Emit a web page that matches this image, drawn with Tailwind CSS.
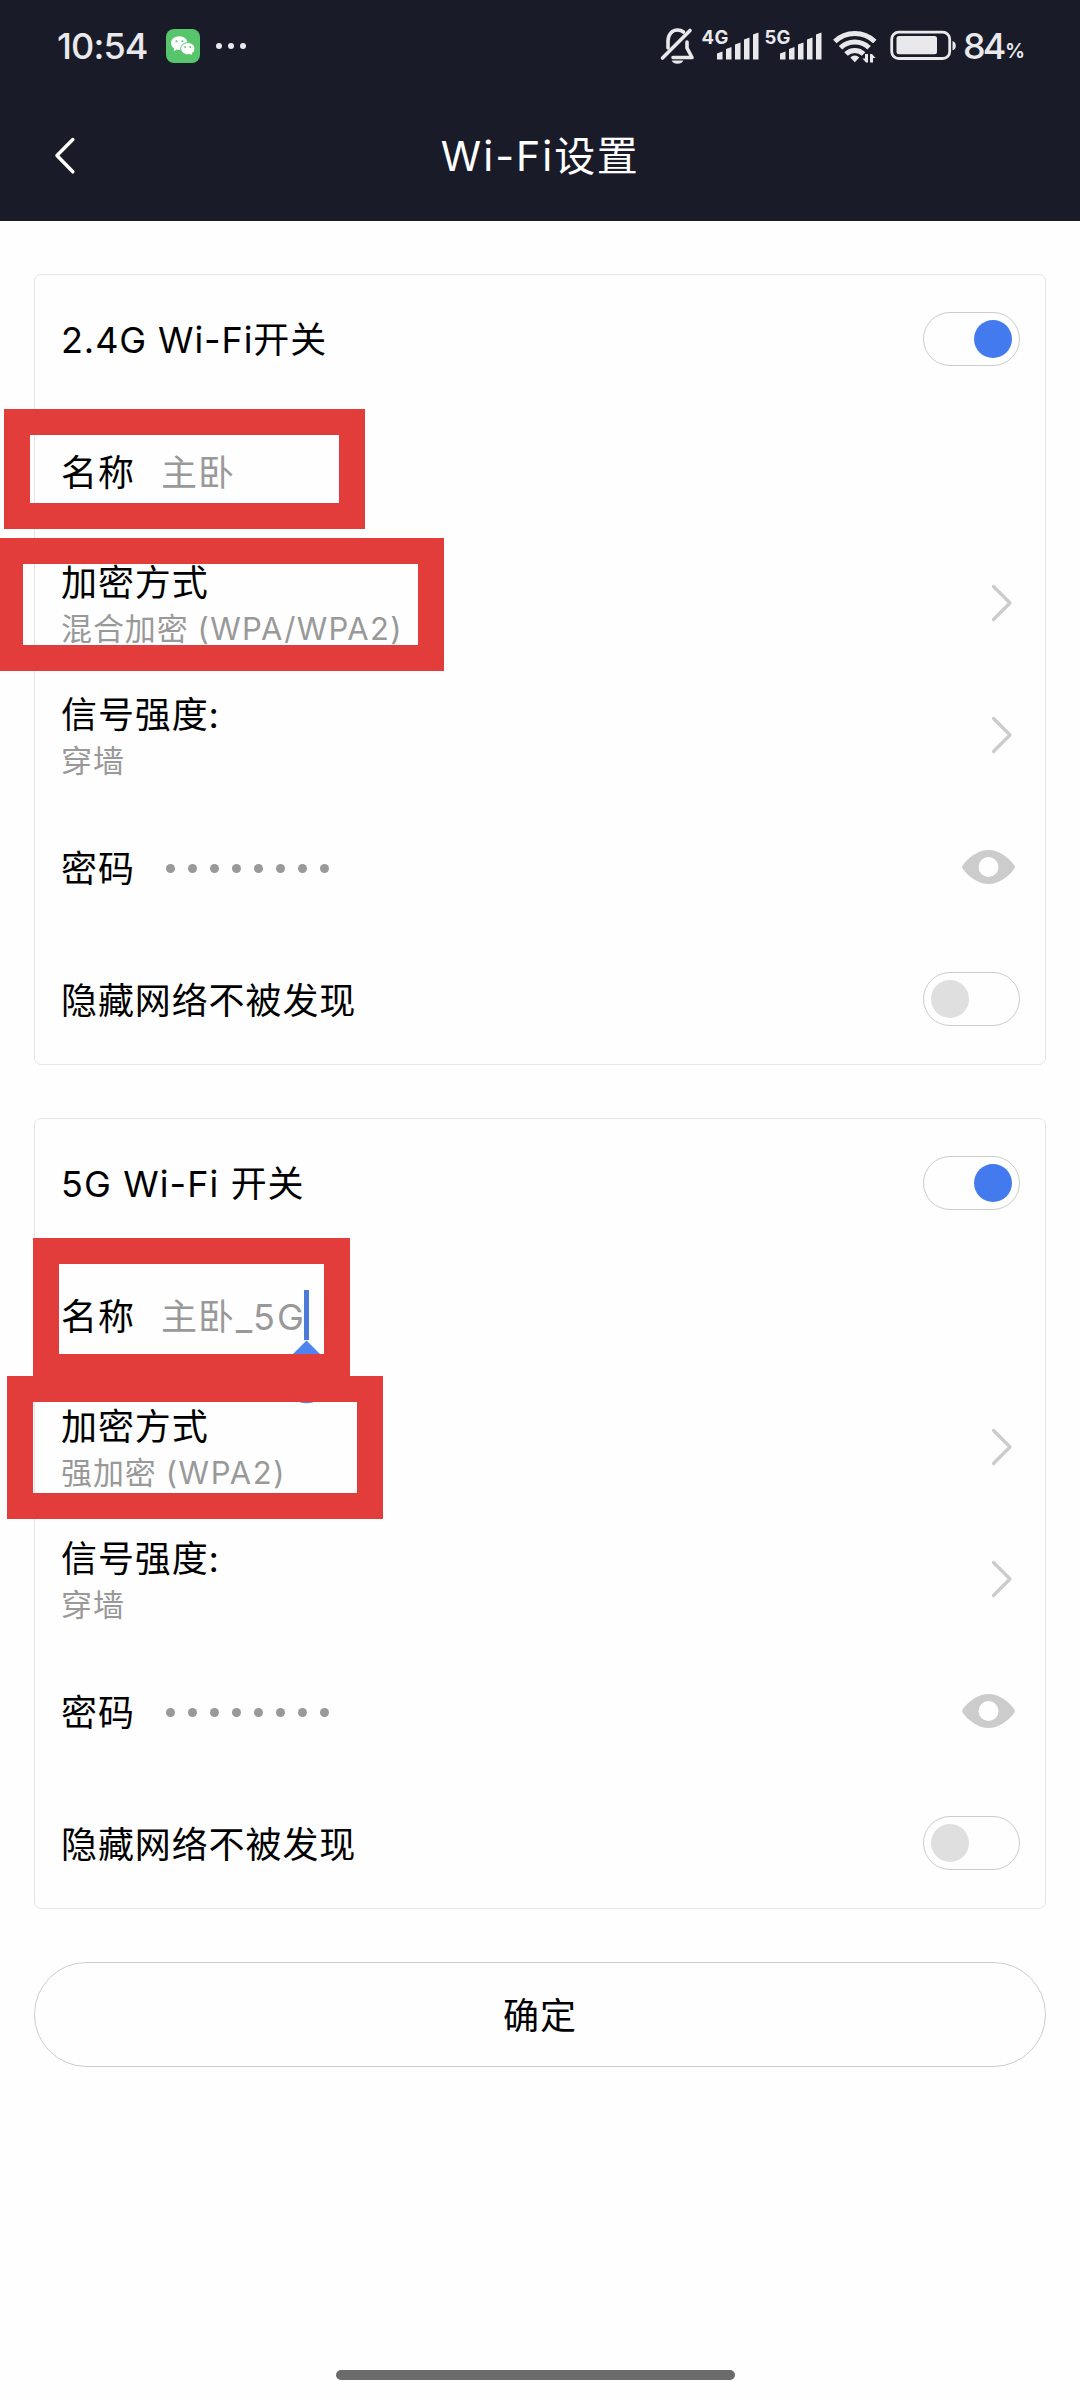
<!DOCTYPE html>
<html lang="zh-CN">
<head>
<meta charset="utf-8">
<title>Wi-Fi设置</title>
<script src="https://cdn.jsdelivr.net/npm/@tailwindcss/browser@4"></script>
</head>
<body class="relative flex h-[2400px] w-[1080px] flex-col overflow-hidden bg-[#fefefe] font-['Inter','Noto_Sans_CJK_SC',sans-serif] text-black">

<header class="h-[221px] shrink-0 bg-[#1a1b28] text-[#e9e9ec]">
  <div class="flex h-[92px] items-center pl-[57px] pr-[57px]">
    <span class="w-[109px] text-[36px] leading-[92px] font-medium tracking-[-0.900px]">10:54</span>
    <svg class="h-[34px] w-[34px]" viewBox="0 0 34 34">
      <rect width="34" height="34" rx="8" fill="#57c56c"/>
      <path d="M13.3 7.2c-4.7 0-8.3 3-8.3 6.900 0 2.200 1.200 4 3.100 5.300l-.3 2.800 3-1.600c.8.200 1.600.3 2.500.3 4.600 0 8.300-3 8.300-6.800s-3.700-6.900-8.300-6.900z" fill="#fff"/>
      <path d="M21.900 13.600c-4 0-7.200 2.700-7.200 6.100s3.200 6 7.200 6c.7 0 1.300-.1 1.900-.2l2.500 1.300-.3-2.300c1.800-1.100 2.900-2.800 2.900-4.800 0-3.400-3-6.100-7-6.100z" fill="#fff" stroke="#57c56c" stroke-width="1"/>
      <g fill="#57c56c"><circle cx="10.400" cy="12.200" r="1"/><circle cx="16.400" cy="12.200" r="1"/><circle cx="19.200" cy="18" r=".9"/><circle cx="24.200" cy="18" r=".9"/></g>
    </svg>
    <div class="ml-[15.500px] flex gap-[6px]">
      <i class="h-[6px] w-[6px] rounded-full bg-[#e9e9ec]"></i><i class="h-[6px] w-[6px] rounded-full bg-[#e9e9ec]"></i><i class="h-[6px] w-[6px] rounded-full bg-[#e9e9ec]"></i>
    </div>
    <svg class="ml-auto h-[92px] w-[303px] shrink-0" viewBox="657 0 303 92" fill="#e9e9ec">
      <!-- muted bell -->
      <g fill="none" stroke="#e9e9ec" stroke-width="3.600" stroke-linecap="round" stroke-linejoin="round">
        <path d="M668 48V41c0-6.500 4-11 9.500-11 2.500 0 4.500.8 6 2"/>
        <path d="M687 42v6l5 9.500H673"/>
        <path d="M662.500 58 690 30.500"/>
      </g>
      <path d="M671.500 60.500h12c-1 2-3.200 3.300-6 3.300s-5-1.300-6-3.300z"/>
      <text x="701.500" y="44" font-size="18.500" font-weight="700" textLength="27">4G</text>
      <path d="M717 53.500l5.500-2V59.500h-5.500zM726 49l5.500-2v12.500H726zM735 44.500l5.500-2v17H735zM744 39.500l5.500-2v22H744zM753 34.500l5.500-2v27H753z"/>
      <text x="764.500" y="44" font-size="18.500" font-weight="700" textLength="26">5G</text>
      <path d="M780 53.500l5.500-2V59.500h-5.500zM789 49l5.500-2v12.500H789zM798 44.500l5.500-2v17H798zM807 39.500l5.500-2v22H807zM816 34.500l5.500-2v27H816z"/>
      <!-- wifi -->
      <g fill="none" stroke="#e9e9ec" stroke-width="5">
        <path d="M834.800 41.500a29 29 0 0 1 40 0"/>
        <path d="M840.500 47.800a20.500 20.500 0 0 1 28.600 0"/>
        <path d="M846 54a12.500 12.500 0 0 1 17.600 0"/>
      </g>
      <path d="M850.300 57.600a6 6 0 0 1 9 0l-4.500 4.700z"/>
      <path d="M868 54v8.500h-2l-3.500-4h2.500V54zM870 62.500V54h2l3.500 4H873v4.500z"/>
      <!-- battery -->
      <rect x="891.700" y="32.200" width="58" height="26.300" rx="7" fill="none" stroke="#e9e9ec" stroke-width="2.800"/>
      <rect x="896.500" y="36" width="40.500" height="18.300" rx="2.500"/>
      <path d="M952.500 41c2.200.6 3.300 2.200 3.300 4.700s-1.100 4-3.300 4.600z"/>
    </svg>
    <span class="ml-[3px] w-[42px] text-[36px] leading-[92px] font-medium tracking-[-3px]">84</span><span class="mt-[9px] w-[18px] text-[20px] font-semibold tracking-[-1px]">%</span>
  </div>
  <div class="flex h-[129px] items-center text-white">
    <svg class="ml-[52px] h-[44px] w-[28px]" viewBox="0 0 28 44" fill="none" stroke="#fff" stroke-width="3.500" stroke-linecap="round" stroke-linejoin="round"><path d="M20.800 4.500 5 20.500l15.800 16.300"/></svg>
    <h1 class="flex-1 pr-[80px] pb-[2px] text-center text-[41px] leading-[60px]"><span class="tracking-[2px]">Wi-Fi</span><span class="tracking-[1.500px]">设置</span></h1>
  </div>
</header>

<main class="flex flex-col px-[34px] pt-[53px] text-[36px] tracking-[0.900px]">
  <section class="flex h-[791px] flex-col rounded-[7px] border border-[#e6e6e6] pl-[26px] pr-[25px]">
    <div class="flex h-[130px] items-center justify-between pb-[2px]"><span class="pt-[2px]">2.4G Wi-Fi开关</span><span class="flex h-[54px] w-[97px] items-center justify-end rounded-full border border-[#ccc] px-[7px]"><i class="h-[38px] w-[38px] rounded-full bg-[#437bef]"></i></span></div>
    <div class="flex h-[132px] items-center pt-[4px]"><span class="w-[100px]">名称</span><span class="text-[#999]">主卧</span></div>
    <div class="flex h-[132px] items-center justify-between">
      <div class="flex flex-col pt-[4px]"><span class="leading-[48px]">加密方式</span><span class="text-[31px] leading-[44px] text-[#999]">混合加密<span class="ml-[9px] tracking-[1.300px]">(WPA/WPA2)</span></span></div>
      <svg class="mr-[4px] h-[42px] w-[28px]" viewBox="0 0 28 42" fill="none" stroke="#ccc" stroke-width="3.300" stroke-linecap="round" stroke-linejoin="round"><path d="M5.500 4.500 22 21 5.500 37.500"/></svg>
    </div>
    <div class="flex h-[132px] items-center justify-between">
      <div class="flex flex-col pt-[4px]"><span class="leading-[48px]">信号强度:</span><span class="text-[31px] leading-[44px] text-[#999]">穿墙</span></div>
      <svg class="mr-[4px] h-[42px] w-[28px]" viewBox="0 0 28 42" fill="none" stroke="#ccc" stroke-width="3.300" stroke-linecap="round" stroke-linejoin="round"><path d="M5.500 4.500 22 21 5.500 37.500"/></svg>
    </div>
    <div class="flex h-[132px] items-center"><span class="w-[105px] pt-[4px]">密码</span>
      <div class="flex gap-[13px] pt-[2px]"><i class="h-[9px] w-[9px] rounded-full bg-[#999]"></i><i class="h-[9px] w-[9px] rounded-full bg-[#999]"></i><i class="h-[9px] w-[9px] rounded-full bg-[#999]"></i><i class="h-[9px] w-[9px] rounded-full bg-[#999]"></i><i class="h-[9px] w-[9px] rounded-full bg-[#999]"></i><i class="h-[9px] w-[9px] rounded-full bg-[#999]"></i><i class="h-[9px] w-[9px] rounded-full bg-[#999]"></i><i class="h-[9px] w-[9px] rounded-full bg-[#999]"></i></div>
      <svg class="mr-[5px] ml-auto h-[34px] w-[53px]" viewBox="0 0 53 34"><path d="M.6 15.500C7.500 6 17 0 26.500 0s19 6 25.900 15.500q.9 1.500 0 3C45.500 28 36 34 26.500 34S7.500 28 .6 18.500q-.9-1.500 0-3z" fill="#ccc"/><circle cx="26.500" cy="17" r="10" fill="#fefefe"/></svg>
    </div>
    <div class="flex h-[131px] items-center justify-between"><span class="pt-[4px]">隐藏网络不被发现</span><span class="flex h-[54px] w-[97px] items-center rounded-full border border-[#ccc] px-[7px]"><i class="h-[38px] w-[38px] rounded-full bg-[#dfdfdf]"></i></span></div>
  </section>

  <section class="mt-[53px] flex h-[791px] flex-col rounded-[7px] border border-[#e6e6e6] pl-[26px] pr-[25px]">
    <div class="flex h-[130px] items-center justify-between pb-[2px]"><span class="pt-[2px]"><span class="tracking-[1.100px]">5G Wi-Fi </span>开关</span><span class="flex h-[54px] w-[97px] items-center justify-end rounded-full border border-[#ccc] px-[7px]"><i class="h-[38px] w-[38px] rounded-full bg-[#437bef]"></i></span></div>
    <div class="flex h-[132px] items-center pt-[4px]"><span class="w-[100px]">名称</span><span class="text-[#999]">主卧<span class="ml-[1px] tracking-[2.300px]">_5G</span></span></div>
    <div class="flex h-[132px] items-center justify-between">
      <div class="flex flex-col pt-[4px]"><span class="leading-[48px]">加密方式</span><span class="text-[31px] leading-[44px] text-[#999]">强加密<span class="ml-[9px] tracking-[1.600px]">(WPA2)</span></span></div>
      <svg class="mr-[4px] h-[42px] w-[28px]" viewBox="0 0 28 42" fill="none" stroke="#ccc" stroke-width="3.300" stroke-linecap="round" stroke-linejoin="round"><path d="M5.500 4.500 22 21 5.500 37.500"/></svg>
    </div>
    <div class="flex h-[132px] items-center justify-between">
      <div class="flex flex-col pt-[4px]"><span class="leading-[48px]">信号强度:</span><span class="text-[31px] leading-[44px] text-[#999]">穿墙</span></div>
      <svg class="mr-[4px] h-[42px] w-[28px]" viewBox="0 0 28 42" fill="none" stroke="#ccc" stroke-width="3.300" stroke-linecap="round" stroke-linejoin="round"><path d="M5.500 4.500 22 21 5.500 37.500"/></svg>
    </div>
    <div class="flex h-[132px] items-center"><span class="w-[105px] pt-[4px]">密码</span>
      <div class="flex gap-[13px] pt-[2px]"><i class="h-[9px] w-[9px] rounded-full bg-[#999]"></i><i class="h-[9px] w-[9px] rounded-full bg-[#999]"></i><i class="h-[9px] w-[9px] rounded-full bg-[#999]"></i><i class="h-[9px] w-[9px] rounded-full bg-[#999]"></i><i class="h-[9px] w-[9px] rounded-full bg-[#999]"></i><i class="h-[9px] w-[9px] rounded-full bg-[#999]"></i><i class="h-[9px] w-[9px] rounded-full bg-[#999]"></i><i class="h-[9px] w-[9px] rounded-full bg-[#999]"></i></div>
      <svg class="mr-[5px] ml-auto h-[34px] w-[53px]" viewBox="0 0 53 34"><path d="M.6 15.500C7.500 6 17 0 26.500 0s19 6 25.900 15.500q.9 1.500 0 3C45.500 28 36 34 26.500 34S7.500 28 .6 18.500q-.9-1.500 0-3z" fill="#ccc"/><circle cx="26.500" cy="17" r="10" fill="#fefefe"/></svg>
    </div>
    <div class="flex h-[131px] items-center justify-between"><span class="pt-[4px]">隐藏网络不被发现</span><span class="flex h-[54px] w-[97px] items-center rounded-full border border-[#ccc] px-[7px]"><i class="h-[38px] w-[38px] rounded-full bg-[#dfdfdf]"></i></span></div>
  </section>

  <button class="mt-[53px] h-[105px] rounded-full border border-[#ccc] pt-[2px] tracking-[0.900px]">确定</button>
</main>

<div class="mt-auto mb-[20px] ml-[336px] h-[10px] w-[399px] shrink-0 rounded-full bg-[#6b6b6b]"></div>

<!-- text caret with its drag handle -->
<svg class="absolute top-[1290px] left-[276px] h-[114px] w-[61px]" viewBox="0 0 61 114"><path d="M30.500 50.500 12 69a26 26 0 1 0 37 0z" fill="#4f84ee"/><rect x="28" y="0" width="5" height="50" fill="#4a7bd6"/></svg>

<!-- highlight frames -->
<div class="absolute top-[409px] left-[4px] h-[120px] w-[361px] border-[26px] border-[#e23c3b]"></div>
<div class="absolute top-[538px] left-[-3px] h-[133px] w-[447px] border-[26px] border-[#e23c3b]"></div>
<div class="absolute top-[1238px] left-[33px] h-[142px] w-[317px] border-[26px] border-[#e23c3b]"></div>
<div class="absolute top-[1376px] left-[7px] h-[143px] w-[376px] border-[26px] border-[#e23c3b]"></div>
</body>
</html>
